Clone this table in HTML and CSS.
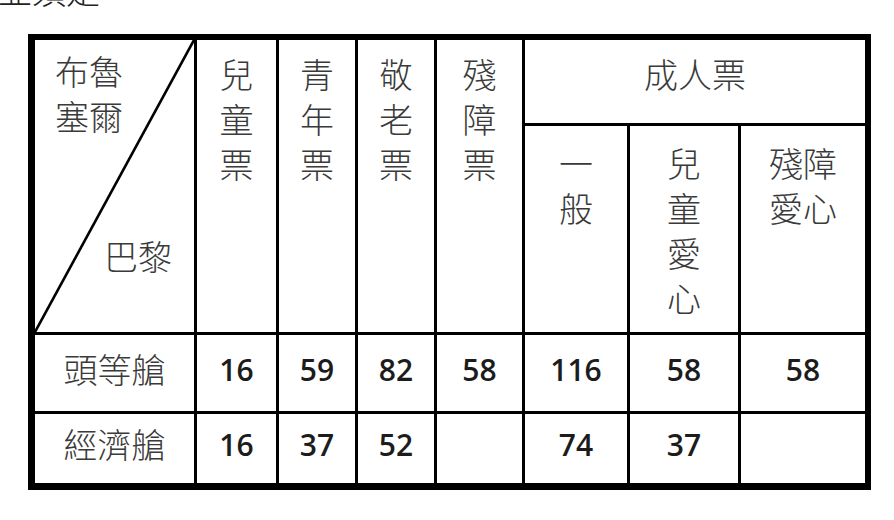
FILE: index.html
```html
<!DOCTYPE html>
<html lang="zh-Hant">
<head>
<meta charset="utf-8">
<title>票價表</title>
<link rel="stylesheet" href="styles.css">
</head>
<body>
<div class="page">
  <div class="lead">並須是</div>
  <div class="frame">
    <div class="grid">
      <div class="cell corner">
        <svg class="diag" viewBox="0 0 159 292" preserveAspectRatio="none"><line x1="0" y1="292" x2="159" y2="0" stroke="#000" stroke-width="2.6"/></svg>
        <div class="from">布魯<br>塞爾</div>
        <div class="to">巴黎</div>
      </div>
      <div class="cell head tall">兒<br>童<br>票</div>
      <div class="cell head tall">青<br>年<br>票</div>
      <div class="cell head tall">敬<br>老<br>票</div>
      <div class="cell head tall">殘<br>障<br>票</div>
      <div class="cell head group">成人票</div>
      <div class="cell head sub">一<br>般</div>
      <div class="cell head sub">兒<br>童<br>愛<br>心</div>
      <div class="cell head sub">殘障<br>愛心</div>

      <div class="cell label">頭等艙</div>
      <div class="cell num">16</div>
      <div class="cell num">59</div>
      <div class="cell num">82</div>
      <div class="cell num">58</div>
      <div class="cell num">116</div>
      <div class="cell num">58</div>
      <div class="cell num">58</div>

      <div class="cell label">經濟艙</div>
      <div class="cell num">16</div>
      <div class="cell num">37</div>
      <div class="cell num">52</div>
      <div class="cell num"></div>
      <div class="cell num">74</div>
      <div class="cell num">37</div>
      <div class="cell num"></div>
    </div>
  </div>
</div>
</body>
</html>
```
FILE: styles.css
```css
html, body {
  margin: 0;
  padding: 0;
  background: #fff;
}
.page {
  width: 894px;
  height: 520px;
  overflow: hidden;
  font-family: "Noto Sans CJK TC", "Noto Sans CJK SC", sans-serif;
}
.lead {
  font-size: 34px;
  line-height: 40px;
  height: 40px;
  margin-top: -30px;
  margin-left: -2px;
  color: #222;
  font-weight: 300;
}
.frame {
  margin-left: 28px;
  margin-top: 24px;
  width: 830px;
  border-style: solid;
  border-color: #000;
  border-width: 6px 6px 7px 7px;
}
.grid {
  display: grid;
  grid-template-columns: 159px 79px 76px 76px 85px 102px 108px 124px;
  grid-template-rows: 83px 206px 76px 69px;
  gap: 3px;
  background: #000;
}
.cell {
  background: #fff;
  color: #3a3a3a;
  font-weight: 300;
  font-size: 34px;
  line-height: 45px;
  text-align: center;
}
.corner {
  grid-row: 1 / 3;
  grid-column: 1;
  position: relative;
  display: flex;
  flex-direction: column;
  justify-content: space-between;
  text-align: left;
  padding: 8px 0 54px 0;
}
.diag {
  position: absolute;
  inset: 0;
  width: 100%;
  height: 100%;
}
.from {
  padding-left: 20px;
}
.to {
  padding-left: 69px;
}
.head {
  padding-top: 11px;
}
.tall {
  grid-row: 1 / 3;
}
.group {
  grid-column: 6 / 9;
}
.sub {
  padding-top: 14px;
}
.label {
  display: flex;
  align-items: center;
  justify-content: center;
  padding-bottom: 10px;
}
.num {
  display: flex;
  align-items: center;
  justify-content: center;
  font-family: "Open Sans", "Liberation Sans", sans-serif;
  font-weight: 600;
  font-size: 30px;
  color: #1c1c1c;
  padding-bottom: 8px;
}
```
